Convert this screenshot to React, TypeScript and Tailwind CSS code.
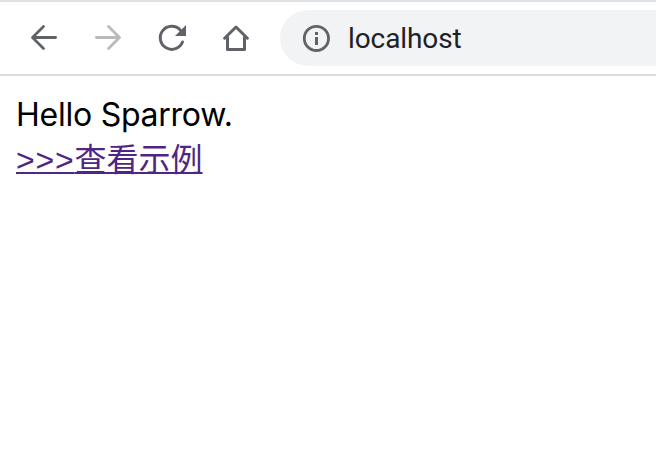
import React from "react";

function BackIcon() {
  return (
    <svg width="32" height="32" viewBox="0 0 32 32" fill="none" stroke="#5f6368" strokeWidth="2.8" strokeLinecap="round" strokeLinejoin="round">
      <path d="M27.6 15.5H4.8M15.5 4.5L4.5 15.5L15.5 26.5" />
    </svg>
  );
}

function ForwardIcon() {
  return (
    <svg width="32" height="32" viewBox="0 0 32 32" fill="none" stroke="#bababa" strokeWidth="2.8" strokeLinecap="round" strokeLinejoin="round">
      <path d="M4.4 15.5H27.2M16.5 4.5L27.5 15.5L16.5 26.5" />
    </svg>
  );
}

function ReloadIcon() {
  return (
    <svg width="32" height="32" viewBox="0 0 32 32" fill="none">
      <path d="M26.5 20A11.5 11.5 0 1 1 24.2 8" stroke="#5f6368" strokeWidth="3" strokeLinecap="round" />
      <path d="M30 3V14H19Z" fill="#5f6368" />
    </svg>
  );
}

function HomeIcon() {
  return (
    <svg width="32" height="32" viewBox="0 0 32 32" fill="none" stroke="#5f6368" strokeWidth="3" strokeLinejoin="round" strokeLinecap="round">
      <path d="M4.6 16.2L16 5L27.4 16.2M7.5 15V27.5H24.5V15" />
    </svg>
  );
}

function InfoIcon() {
  return (
    <svg width="28" height="28" viewBox="0 0 28 28" fill="none">
      <circle cx="14.4" cy="14.4" r="12.1" stroke="#606367" strokeWidth="2.8" />
      <path d="M13 8h3v3h-3zM13 13h3v8h-3z" fill="#606367" />
    </svg>
  );
}

export default function App() {
  return (
    <div className="h-[450px] w-full overflow-hidden bg-white">
      <header className="flex h-[76px] items-center border-t-2 border-b-2 border-t-[#dee1e6] border-b-[#dadce0] pl-7">
        <nav className="flex shrink-0 gap-8">
          <BackIcon />
          <ForwardIcon />
          <ReloadIcon />
          <HomeIcon />
        </nav>
        <div className="ml-7 flex h-14 flex-1 items-center gap-[18px] rounded-l-full bg-[#f1f3f4] pl-[22px]">
          <InfoIcon />
          <span className="pt-0.5 font-['Roboto',sans-serif] text-[28px] leading-8 tracking-[-0.1px] text-[#202124]">localhost</span>
        </div>
      </header>
      <main className="flex flex-col items-start pt-4 pl-4 font-['Inter','Noto_Sans_CJK_SC',sans-serif] text-[32px] leading-[45px]">
        <p className="tracking-[-0.25px] text-black">Hello Sparrow.</p>
        <a href="#" className="text-[#4f2683] underline decoration-2 [text-decoration-skip-ink:none]">
          <span className="font-['Liberation_Sans',sans-serif] tracking-[0.8px]">&gt;&gt;&gt;</span>查看示例
        </a>
      </main>
    </div>
  );
}
